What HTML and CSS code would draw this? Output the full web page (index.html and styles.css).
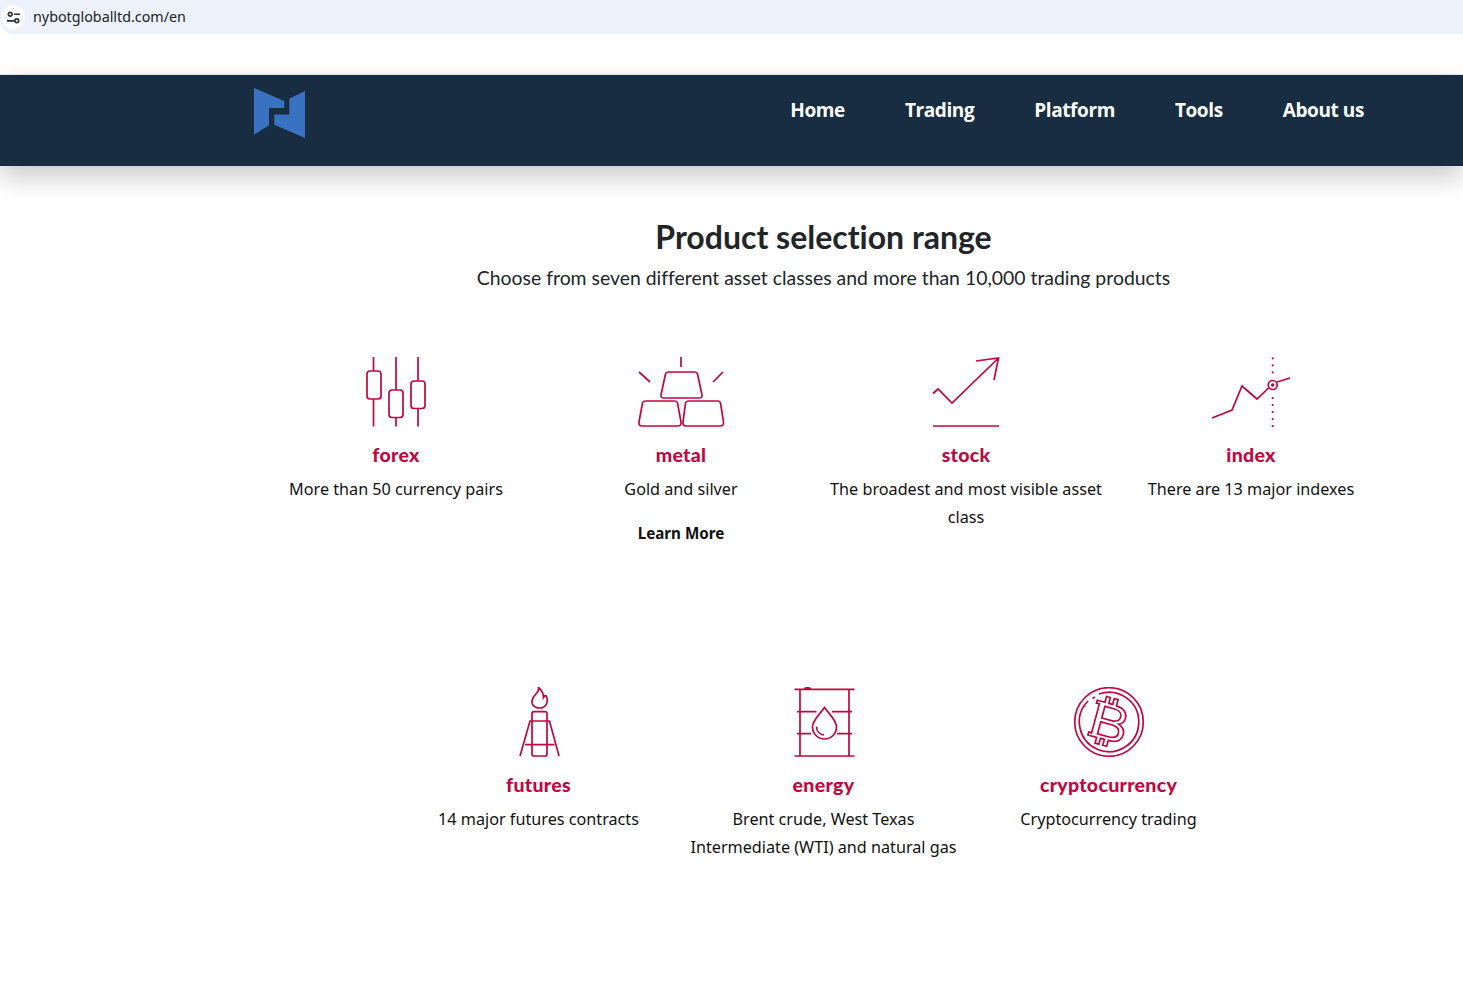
FILE: index.html
```html
<!DOCTYPE html>
<html lang="en">
<head>
<meta charset="utf-8">
<title>Product selection range</title>
<link rel="stylesheet" href="styles.css">
</head>
<body>
<div class="address-bar">
  <span class="site-chip">
    <svg class="chip-icon" viewBox="0 0 16 16"><circle cx="4.500" cy="4.500" r="2"/><path d="M8.500 4.500H15M1 11.500h7.500"/><circle cx="11.500" cy="11.500" r="2"/></svg>
  </span>
  <span class="url">nybotgloballtd.com/en</span>
</div>
<header class="site-header">
  <svg class="logo" viewBox="0 0 51 50"><path d="M0 0 30.300 13V20H15V37.300L0 46.700Z"/><path d="M51 3V50L20.300 36.700V26.500H35.300V10.700Z"/></svg>
  <nav class="main-nav">
    <a>Home</a><a>Trading</a><a>Platform</a><a>Tools</a><a>About us</a>
  </nav>
</header>
<main class="products">
  <h1>Product selection range</h1>
  <p class="lead">Choose from seven different asset classes and more than 10,000 trading products</p>
  <div class="grid">
    <article class="item">
      <svg class="icon" viewBox="0 0 100 70"><path d="M27.500 0V14M27.500 42V69.500M50 0V33M50 60.500V69.500M72 0V24M72 51.500V69.500"/><rect x="21" y="14" width="14" height="28" rx="3"/><rect x="43" y="33" width="14" height="27.500" rx="3"/><rect x="65" y="24" width="14" height="27.500" rx="3"/></svg>
      <h2>forex</h2>
      <p>More than 50 currency pairs</p>
    </article>
    <article class="item">
      <svg class="icon" viewBox="0 0 100 70"><path d="M50 0V10M8 15 19 25M92 15 82 25"/><path d="M37 15H64Q66 15 66.500 17L71 38Q71.500 41 68 41H33Q29.500 41 30 38L34.500 17Q35 15 37 15Z"/><path d="M14 44H44Q46 44 46.500 46L50 65Q50.500 69 47 69H11Q7.500 69 8 65L11.500 46Q12 44 14 44Z"/><path d="M57 44H87Q89 44 89.500 46L92.500 65Q93 69 89 69H55Q51.500 69 52 65L54.500 46Q55 44 57 44Z"/></svg>
      <h2>metal</h2>
      <p>Gold and silver</p>
      <a class="more">Learn More</a>
    </article>
    <article class="item">
      <svg class="icon" viewBox="0 0 100 70"><path d="M17 36.500 22 32 36 46 82.500 1M60 4 82.500 1 78 23M17 69H83"/></svg>
      <h2>stock</h2>
      <p>The broadest and most visible asset class</p>
    </article>
    <article class="item">
      <svg class="icon" viewBox="0 0 100 70"><path d="M11 61 31 53 41 29 56 42 67.500 31M76 25 89 21"/><circle cx="71.700" cy="28" r="4.500"/><circle class="solid" cx="71.700" cy="28" r="1.800"/><g class="solid"><circle cx="71.700" cy="1.300" r="1.100"/><circle cx="71.700" cy="8.300" r="1.100"/><circle cx="71.700" cy="15.300" r="1.100"/><circle cx="71.700" cy="41" r="1.100"/><circle cx="71.700" cy="48" r="1.100"/><circle cx="71.700" cy="55" r="1.100"/><circle cx="71.700" cy="62" r="1.100"/><circle cx="71.700" cy="69" r="1.100"/></g></svg>
      <h2>index</h2>
      <p>There are 13 major indexes</p>
    </article>
    <article class="item">
      <svg class="icon" viewBox="0 0 100 70"><path d="M49.500 .500C50.500 5 46 7 44 11 41 17 45 21 50.500 21 56 21 60 16 57.500 9.500 56.500 7.500 55.500 9 54.500 10.500 54.500 6 52.500 3 49.500 .500Z"/><rect x="43" y="24.700" width="15" height="44.300" rx="2"/><path d="M31 69 41 34H60.500L70 69M36 57.700H65.500"/></svg>
      <h2>futures</h2>
      <p>14 major futures contracts</p>
    </article>
    <article class="item">
      <svg class="icon" viewBox="0 0 100 70"><path d="M20.500 2.300H80.500M20.500 69H80.500M26 2.300V69M75 2.300V69M30.500 2.300C30.500 .2 36.500 .2 36.500 2.300M23 24.700H42.500M58 24.700H78M23 46.700H37M63 46.700H78"/><path d="M50.500 20.500C46 27 38.500 33 38.500 40A12 12 0 0 0 62.500 40C62.500 33 55 27 50.500 20.500Z"/><path d="M42.500 39.500C42.500 44 45.500 47.500 50 48"/></svg>
      <h2>energy</h2>
      <p>Brent crude, West Texas<br>Intermediate (WTI) and natural gas</p>
    </article>
    <article class="item">
      <svg class="icon" viewBox="0 0 100 70"><circle cx="50" cy="35" r="34.300"/><path d="M29 14A29.700 29.700 0 1 0 40 7"/><path d="M25.500 19.500 26 18.800M33.500 11.500 36 10"/><g transform="rotate(15 50 35)"><path d="M36 17H41V11H45V17H49V11H53V17.500C61 18 65 22 65 27 65 31 63 33.500 60 34.500 64 36 67 39 67 43.500 67 50 62 53 54 53V59H50V53H46V59H42V53H33V50H36V20H33V17Z"/><path d="M42 21H52C57 21 60 23.500 60 27 60 31 57 33 52 33H42ZM42 37H53C59 37 62 39.500 62 43.500 62 47.500 59 49.500 53 49.500H42Z"/></g></svg>
      <h2>cryptocurrency</h2>
      <p>Cryptocurrency trading</p>
    </article>
  </div>
</main>
</body>
</html>
```

FILE: styles.css
```css
* { box-sizing: border-box; }
html, body { margin: 0; padding: 0; }
body {
  background: #fff;
  color: #111;
  font-family: "Noto Sans", "Open Sans", sans-serif;
  height: 982px;
  overflow: hidden;
}
.address-bar {
  height: 34px;
  background: #edf2fa;
  border-bottom-left-radius: 14px;
  display: flex;
  align-items: center;
  gap: 8px;
  padding-left: 1px;
}
.site-chip {
  width: 24px;
  height: 24px;
  border-radius: 50%;
  background: #fff;
  display: flex;
  align-items: center;
  justify-content: center;
}
.chip-icon {
  width: 15px;
  height: 15px;
  fill: none;
  stroke: #2f3337;
  stroke-width: 1.800;
}
.url {
  font-family: "Noto Sans", sans-serif;
  font-size: 14.300px;
  line-height: 20px;
  color: #202124;
}
.site-header {
  margin-top: 40px;
  height: 92px;
  background: #182d41;
  border-top: 1px solid #e4e4e4;
  box-shadow: 0 12px 24px rgba(0, 0, 0, .2);
  display: flex;
  align-items: flex-start;
  padding: 13px 99px 0 254px;
}
.logo {
  width: 51px;
  height: 50px;
  fill: #3a72c2;
}
.main-nav {
  margin-left: auto;
  display: flex;
  gap: 60px;
  padding-top: 8px;
}
.main-nav a {
  color: #fff;
  font-family: "Open Sans", sans-serif;
  font-weight: 700;
  font-size: 19px;
  letter-spacing: -.4px;
  line-height: 28px;
}
.products { padding-top: 50px; }
h1 {
  margin: 0 0 0 253.500px;
  width: 1140px;
  text-align: center;
  font-family: Lato, sans-serif;
  font-size: 32px;
  font-weight: 700;
  font-variant-ligatures: none;
  line-height: 42px;
  color: #212529;
}
.lead {
  margin: 5px 0 0 253.500px;
  width: 1140px;
  text-align: center;
  font-family: Lato, sans-serif;
  font-size: 19.400px;
  font-variant-ligatures: none;
  line-height: 30px;
  color: #212529;
}
.grid {
  margin: 64px 0 0 253.500px;
  width: 1140px;
  display: flex;
  flex-wrap: wrap;
  justify-content: center;
}
.item {
  width: 285px;
  height: 330px;
  text-align: center;
  display: flex;
  flex-direction: column;
  align-items: center;
}
.icon {
  width: 100px;
  height: 70px;
  flex: none;
  fill: none;
  stroke: #c1073f;
  stroke-width: 1.700;
}
.icon .solid {
  fill: #c1073f;
  stroke: none;
}
h2 {
  margin: 15px 0 0;
  font-family: Lato, sans-serif;
  font-weight: 900;
  font-size: 19.500px;
  line-height: 26px;
  letter-spacing: .3px;
  color: #c1073f;
}
.item p {
  margin: 7px 0 0;
  padding: 0 5px;
  font-size: 16.200px;
  line-height: 28px;
  color: #111;
}
.more {
  margin-top: 20px;
  font-size: 15.200px;
  font-weight: 700;
  line-height: 20px;
  color: #111;
}
```
